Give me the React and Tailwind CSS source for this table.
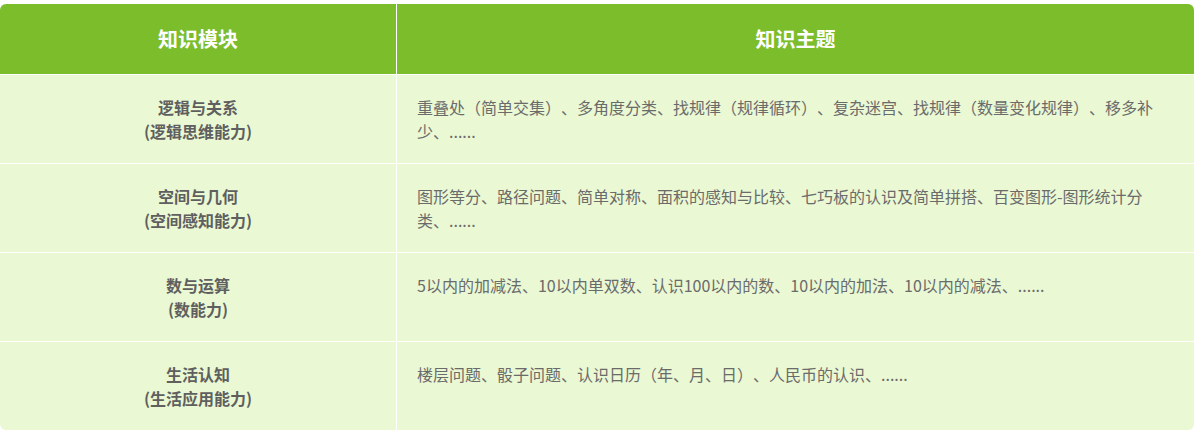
const rows = [
  {
    title: "逻辑与关系",
    sub: "(逻辑思维能力)",
    topics:
      "重叠处（简单交集）、多角度分类、找规律（规律循环）、复杂迷宫、找规律（数量变化规律）、移多补少、......",
  },
  {
    title: "空间与几何",
    sub: "(空间感知能力)",
    topics:
      "图形等分、路径问题、简单对称、面积的感知与比较、七巧板的认识及简单拼搭、百变图形-图形统计分类、......",
  },
  {
    title: "数与运算",
    sub: "(数能力)",
    topics: "5以内的加减法、10以内单双数、认识100以内的数、10以内的加法、10以内的减法、......",
  },
  {
    title: "生活认知",
    sub: "(生活应用能力)",
    topics: "楼层问题、骰子问题、认识日历（年、月、日）、人民币的认识、......",
  },
];

export default function App() {
  return (
    <div className="w-[1194px] bg-white pt-1 font-['Noto_Sans_CJK_SC','Noto_Sans',sans-serif] [text-spacing-trim:space-all]">
      <div className="grid grid-cols-[396px_1fr] gap-px overflow-hidden rounded-md bg-white">
        <div className="flex h-[70px] items-center justify-center bg-[#7cbd2b] text-[20px] font-bold text-white">
          知识模块
        </div>
        <div className="flex h-[70px] items-center justify-center bg-[#7cbd2b] text-[20px] font-bold text-white">
          知识主题
        </div>
        {rows.map((row) => (
          <div key={row.title} className="contents">
            <div className="h-[88px] bg-[#eaf8d3] pt-5 text-center text-[16px] leading-6 font-bold text-[#5f5f5f]">
              <div>{row.title}</div>
              <div>{row.sub}</div>
            </div>
            <div className="h-[88px] bg-[#eaf8d3] pt-5 pl-5 pr-[39px] text-[16px] leading-6 text-[#6b6b6b]">
              {row.topics}
            </div>
          </div>
        ))}
      </div>
    </div>
  );
}
